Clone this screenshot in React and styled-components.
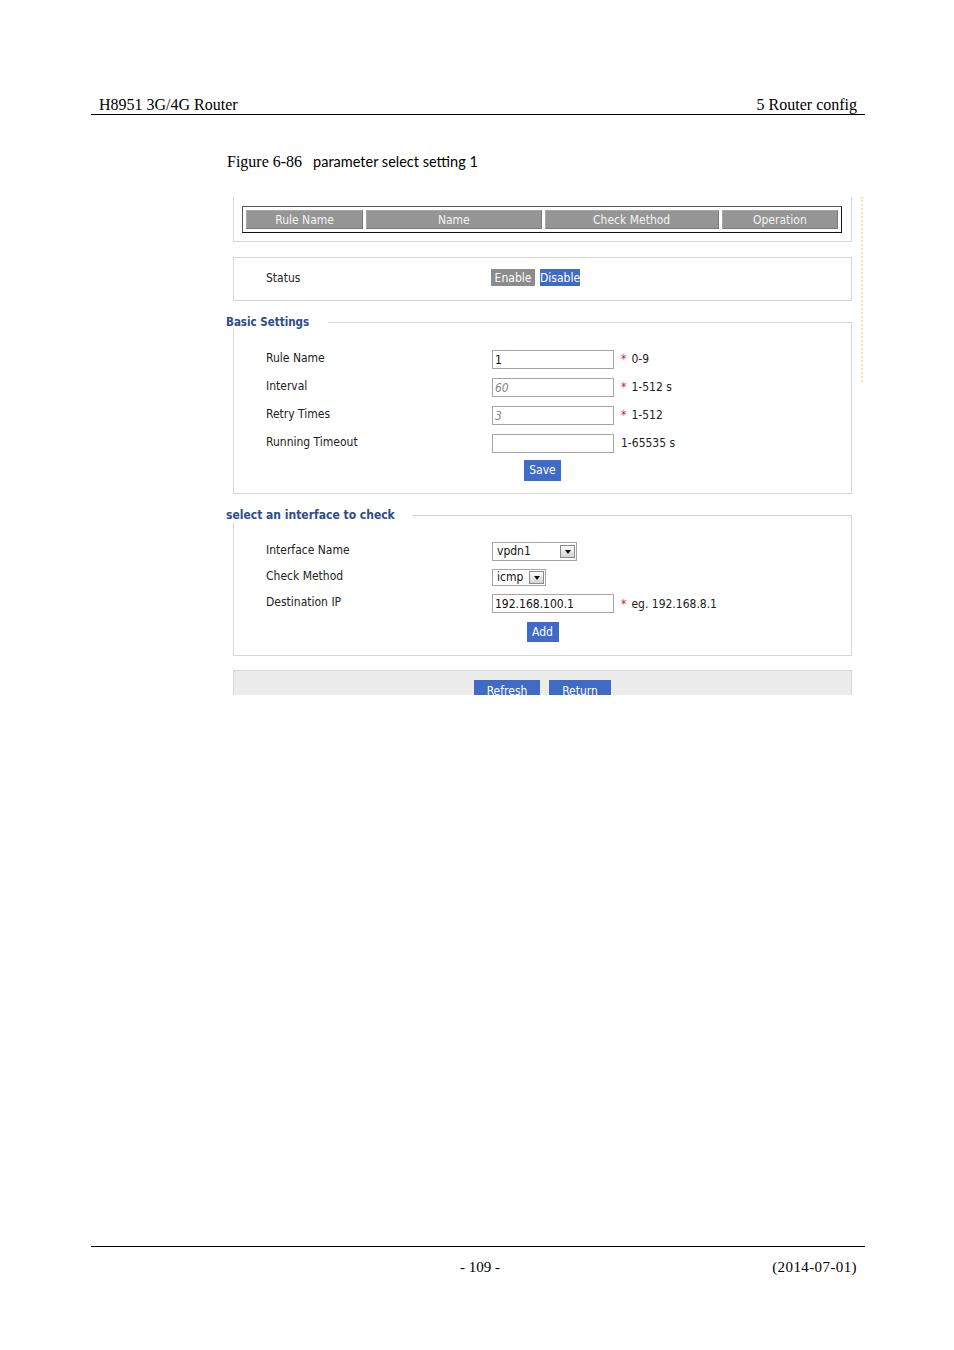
import React from 'react'
import styled, { createGlobalStyle } from 'styled-components'

const GlobalStyle = createGlobalStyle`
  html, body {
    margin: 0;
    padding: 0;
    background: #fff;
  }
`

const uiFont = `"DejaVu Sans Condensed", "DejaVu Sans", "Liberation Sans", sans-serif`

const Page = styled.div`
  width: 954px;
  height: 1350px;
  display: flex;
  flex-direction: column;
  box-sizing: border-box;
  padding-top: 95px;
  font-family: "Liberation Serif", "Times New Roman", serif;
  color: #000;
`

const RunningHead = styled.div`
  margin: 0 89px 0 91px;
  padding: 0 8px;
  height: 19px;
  line-height: 19px;
  font-size: 16px;
  display: flex;
  justify-content: space-between;
  border-bottom: 1px solid #000;
`

const Caption = styled.div`
  margin: 37px 0 0 227px;
  height: 20px;
  line-height: 20px;
  font-size: 16px;
  span {
    font-family: Lato, "Open Sans", sans-serif;
    font-size: 14.5px;
    margin-left: 11px;
  }
`

const Shot = styled.div`
  margin: 25px 0 0 226px;
  display: flex;
  font-family: ${uiFont};
  font-size: 11px;
  color: #222;
`

const ShotBody = styled.div`
  width: 619px;
  margin-left: 7px;
`

const MarginMarks = styled.div`
  margin-left: 9px;
  height: 185px;
  border-left: 2px dotted #f7e4ad;
`

const TablePanel = styled.div`
  box-sizing: border-box;
  border: 1px solid #d6d6d6;
  border-top: none;
  padding: 9px 9px 8px 8px;
`

const HeadTable = styled.div`
  border: 1px solid #555;
  border-bottom-color: #111;
  border-right-color: #111;
  padding: 3px;
  display: grid;
  grid-template-columns: 117fr 175fr 174fr 116fr;
  gap: 3px;
`

const HeadCell = styled.div`
  box-sizing: border-box;
  height: 19px;
  line-height: 18px;
  background: #959595;
  border: 1px solid #7a7a7a;
  border-top-color: #a8a8a8;
  border-left-color: #a8a8a8;
  color: #f3f3f3;
  font-size: 12px;
  text-align: center;
`

const StatusPanel = styled.div`
  box-sizing: border-box;
  margin-top: 15px;
  height: 44px;
  border: 1px solid #d6d6d6;
  padding-left: 32px;
  display: flex;
  align-items: center;
  padding-bottom: 3px;
`

const StatusLabel = styled.div`
  width: 225px;
  font-size: 12px;
`

const Toggle = styled.span`
  display: inline-block;
  width: ${p => p.$w}px;
  height: 17px;
  line-height: 18px;
  margin-right: 5px;
  text-align: center;
  font-size: 12px;
  color: #fff;
  background: ${p => (p.$active ? '#3f6bc6' : '#8c8c8c')};
`

const Fieldset = styled.fieldset`
  margin: ${p => p.$top}px 0 0 0;
  padding: ${p => p.$padTop}px 0 ${p => p.$padBottom}px 0;
  border: 1px solid #d6d6d6;
  min-width: 0;
`

const Legend = styled.legend`
  margin-left: -8px;
  padding: 0 ${p => p.$gap}px 0 0;
  font-family: ${uiFont};
  font-size: ${p => (p.$big ? 12 : 11.5)}px;
  font-weight: ${p => (p.$big ? 600 : 700)};
  line-height: 14px;
  color: #2b4c8f;
`

const Row = styled.div`
  height: ${p => p.$h}px;
  padding-left: 32px;
  display: flex;
  align-items: center;
`

const Label = styled.div`
  width: 226px;
  font-size: 12px;
  margin-top: -3px;
`

const TextInput = styled.div`
  box-sizing: border-box;
  width: 122px;
  height: 19px;
  border: 1px solid #a5a5a5;
  padding-left: 2px;
  line-height: 18px;
  font-size: 12px;
  color: ${p => (p.$hint ? '#8a8a8a' : '#111')};
  font-style: ${p => (p.$hint ? 'italic' : 'normal')};
`

const Hint = styled.div`
  margin-left: 7px;
  font-size: 12px;
  color: #222;
  b {
    color: #e0202a;
    font-weight: normal;
    margin-right: 5px;
  }
`

const Select = styled.div`
  box-sizing: border-box;
  width: ${p => p.$w}px;
  height: ${p => p.$h}px;
  border: 1px solid #a5a5a5;
  padding: 0 1px 0 4px;
  display: flex;
  align-items: center;
  justify-content: space-between;
  font-size: 12px;
  color: #111;
`

const Arrow = styled.span`
  box-sizing: border-box;
  width: 15px;
  height: 13px;
  border: 1px solid #8a8a8a;
  background: linear-gradient(#ffffff, #d4d4d4);
  display: flex;
  align-items: center;
  justify-content: center;
  &::after {
    content: '';
    border-left: 3px solid transparent;
    border-right: 3px solid transparent;
    border-top: 4px solid #111;
    margin-top: 1px;
  }
`

const Actions = styled.div`
  display: flex;
  justify-content: center;
  margin-top: ${p => p.$top}px;
`

const BlueButton = styled.span`
  display: inline-block;
  box-sizing: border-box;
  height: ${p => p.$h || 21}px;
  line-height: ${p => p.$h || 21}px;
  min-width: ${p => p.$w}px;
  padding: 0 5px;
  text-align: center;
  font-size: 12px;
  color: #fff;
  background: #3f6bc6;
`

const BottomBar = styled.div`
  box-sizing: border-box;
  margin-top: 14px;
  height: 25px;
  overflow: hidden;
  background: #ececec;
  border: 1px solid #d6d6d6;
  border-bottom: none;
  padding-top: 9px;
  display: flex;
  justify-content: center;
  gap: 9px;
`

const Footer = styled.div`
  margin: auto 89px 0 91px;
  box-sizing: border-box;
  height: 104px;
  border-top: 1px solid #000;
  padding: 11px 8px 0;
  display: grid;
  grid-template-columns: 1fr auto 1fr;
  font-size: 15px;
  line-height: 19px;
  div:nth-child(2) {
    padding-left: 4px;
  }
  div:last-child {
    text-align: right;
    letter-spacing: 0.4px;
  }
`

const basicRows = [
  { label: 'Rule Name', value: '1', note: '0-9', req: true },
  { label: 'Interval', value: '60', note: '1-512 s', req: true, hint: true },
  { label: 'Retry Times', value: '3', note: '1-512', req: true, hint: true },
  { label: 'Running Timeout', value: '', note: '1-65535 s' },
]

export default function App() {
  return (
    <>
      <GlobalStyle />
      <Page>
        <RunningHead>
          <div>H8951 3G/4G Router</div>
          <div>5 Router config</div>
        </RunningHead>
        <Caption>
          Figure 6-86<span>parameter select setting 1</span>
        </Caption>

        <Shot>
          <ShotBody>
            <TablePanel>
              <HeadTable>
                {['Rule Name', 'Name', 'Check Method', 'Operation'].map(h => (
                  <HeadCell key={h}>{h}</HeadCell>
                ))}
              </HeadTable>
            </TablePanel>

            <StatusPanel>
              <StatusLabel>Status</StatusLabel>
              <Toggle $w={44}>Enable</Toggle>
              <Toggle $w={40} $active>Disable</Toggle>
            </StatusPanel>

            <Fieldset $top={14} $padTop={16} $padBottom={12}>
              <Legend $gap={19}>Basic Settings</Legend>
              {basicRows.map(r => (
                <Row $h={28} key={r.label}>
                  <Label>{r.label}</Label>
                  <TextInput $hint={r.hint}>{r.value}</TextInput>
                  <Hint>
                    {r.req && <b>*</b>}
                    {r.note}
                  </Hint>
                </Row>
              ))}
              <Actions $top={3}>
                <BlueButton $w={36}>Save</BlueButton>
              </Actions>
            </Fieldset>

            <Fieldset $top={14} $padTop={16} $padBottom={13}>
              <Legend $big $gap={17}>select an interface to check</Legend>
              <Row $h={26}>
                <Label>Interface Name</Label>
                <Select $w={85} $h={19}>
                  vpdn1
                  <Arrow />
                </Select>
              </Row>
              <Row $h={26}>
                <Label>Check Method</Label>
                <Select $w={54} $h={17}>
                  icmp
                  <Arrow />
                </Select>
              </Row>
              <Row $h={27}>
                <Label>Destination IP</Label>
                <TextInput>192.168.100.1</TextInput>
                <Hint>
                  <b>*</b>eg. 192.168.8.1
                </Hint>
              </Row>
              <Actions $top={5}>
                <BlueButton $w={32} $h={20}>Add</BlueButton>
              </Actions>
            </Fieldset>

            <BottomBar>
              <BlueButton $w={66} $h={22}>Refresh</BlueButton>
              <BlueButton $w={62} $h={22}>Return</BlueButton>
            </BottomBar>
          </ShotBody>
          <MarginMarks />
        </Shot>

        <Footer>
          <div />
          <div>- 109 -</div>
          <div>(2014-07-01)</div>
        </Footer>
      </Page>
    </>
  )
}
